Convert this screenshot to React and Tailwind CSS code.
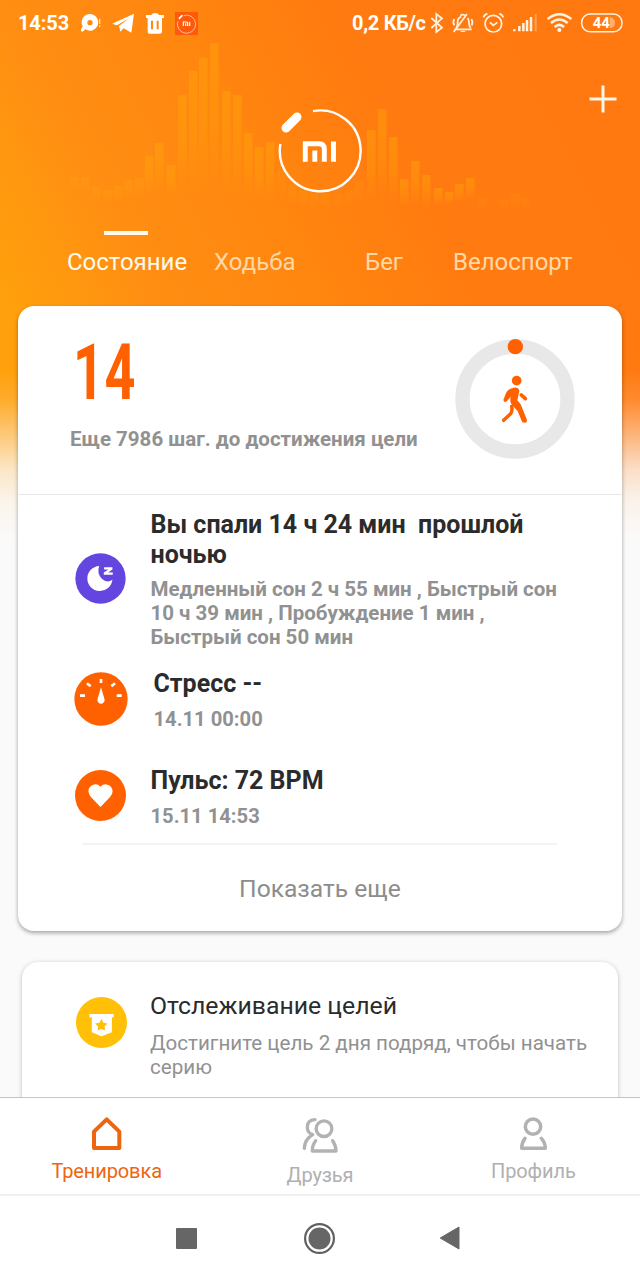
const waveBars = [
  [70, 177, 12], [81, 177, 14], [92, 187, 14], [103, 190, 14], [114, 186, 16], [124, 180, 18], [135, 178, 20],
  [145, 156, 40], [155, 143, 50], [167, 165, 32], [178, 95, 100], [189, 71, 122], [199, 58, 136], [210, 43, 150],
  [222, 91, 104], [233, 95, 100], [244, 133, 66], [255, 147, 54], [266, 142, 60], [277, 170, 30], [288, 184, 22],
  [299, 190, 18], [310, 194, 16], [321, 194, 16], [333, 194, 16], [345, 190, 18], [355, 182, 24], [367, 130, 74],
  [378, 109, 94], [389, 137, 68], [400, 179, 28], [411, 161, 46], [422, 175, 32], [434, 188, 18], [445, 192, 12],
  [455, 184, 18], [466, 178, 22], [478, 198, 12], [500, 200, 10], [511, 194, 14], [522, 198, 12],
];

function Wave() {
  return (
    <svg className="absolute left-0 top-0 -z-10" width="640" height="300" viewBox="0 0 640 300" aria-hidden="true">
      <defs>
        <linearGradient id="bar" x1="0" y1="0" x2="0" y2="1">
          <stop offset="0" stopColor="#ffab08" stopOpacity=".4" />
          <stop offset=".5" stopColor="#ffab08" stopOpacity=".28" />
          <stop offset="1" stopColor="#ffab08" stopOpacity="0" />
        </linearGradient>
      </defs>
      {waveBars.map(([x, y, h]) => (
        <rect key={x} x={x} y={y} width="8.5" height={h} rx="1" fill="url(#bar)" opacity={x > 475 || (x > 276 && x < 360) ? 0.35 : x < 140 ? 0.6 : 1} />
      ))}
    </svg>
  );
}

function StatusBar() {
  return (
    <div className="flex h-[46px] items-center text-white">
      <span className="ml-[18px] w-[62px] text-[20px] font-bold leading-none tracking-[-0.1px]">14:53</span>
      <svg width="21" height="20" viewBox="240 36 63 60" aria-hidden="true">
        <path fillRule="evenodd" fill="#fff" d="M270 39a25 25 0 1 1-14 46l-8 7q-7 0-5-8l5-8A25 25 0 0 1 270 39ZM270 57a8 8 0 1 0 0 16a8 8 0 1 0 0-16Z" />
        <path d="M299 53V69M299 73V78" stroke="#ffe0b8" strokeWidth="4" />
      </svg>
      <svg className="ml-[11px]" width="22" height="20" viewBox="335 38 66 60" aria-hidden="true">
        <path fill="#fff" d="M335 70 401 40 393 97 370 84 360 94 356 77 386 54 350 75Z" />
      </svg>
      <svg className="ml-[12px]" width="18" height="21" viewBox="438 35 54 63" aria-hidden="true">
        <path fillRule="evenodd" fill="#fff" d="M438 41H454L459 36H472L477 41H492V50H486V91Q486 97 480 97H449Q443 97 443 91V50H438ZM453 58V84H459V58ZM470 58V84H476V58Z" />
      </svg>
      <svg className="ml-[11px]" width="23" height="23" viewBox="525 32 69 69" aria-hidden="true">
        <rect x="525" y="32" width="69" height="69" fill="#ff5a0c" />
        <path d="M551 43A27 27 0 1 1 534 60" fill="none" stroke="#ffd5b8" strokeWidth="2.5" />
        <path d="M538 51 546 43" stroke="#fff" strokeWidth="5" strokeLinecap="round" />
        <path d="M550 74V62H560Q563 62 563 66V74M557 66V74M569 61V74" fill="none" stroke="#fff" strokeWidth="3.5" />
      </svg>
      <span className="ml-[154px] w-[78px] whitespace-nowrap text-[20px] font-bold leading-none tracking-[-0.3px]">0,2 КБ/с</span>
      <svg width="193" height="22" viewBox="331 34 579 66" fill="none" stroke="#fff3e2" strokeWidth="5.2" aria-hidden="true">
        <path d="M335 52 367 81 350 94V40L367 53 335 82" />
        <path d="M404 86H456M410 82Q414 76 414 63Q414 52 425 48M444 52Q448 58 448 68Q448 76 453 82M442 40 402 94M404 55Q398 64 404 74M455 55Q461 64 456 74M422 45Q430 38 438 46" />
        <path d="M420 90H440Q430 98 420 90Z" fill="#fff3e2" stroke="none" />
        <circle cx="521" cy="69" r="25" />
        <path d="M511 65 521 74 533 65M491 50Q494 42 503 39M551 50Q548 42 539 39" />
        <path d="M584 86V92M599 76V92M611 67V92M622 58V92M634 49V92" strokeWidth="7.5" />
        <path d="M648 40V92" strokeWidth="6" opacity=".35" />
        <path d="M684 55Q719 26 755 55M694 67Q719 46 744 67M705 79Q719 66 733 79" strokeWidth="7.5" />
        <circle cx="719" cy="88" r="6" fill="#fff" stroke="none" />
        <rect x="786" y="40" width="121" height="53" rx="25" strokeWidth="4.5" />
        <path d="M870 49Q886 52 886 66Q886 80 870 83Z" fill="#fff" opacity=".4" stroke="none" />
        <text x="819" y="82" fill="#fff" stroke="none" fontFamily="Roboto, sans-serif" fontWeight="700" fontSize="45">44</text>
      </svg>
    </div>
  );
}

function Logo() {
  return (
    <svg width="84" height="84" viewBox="278 109 84 84" fill="none" stroke="#fff" aria-label="Mi">
      <path d="M313 111.1A40.4 40.4 0 1 1 280.4 144" strokeWidth="2.4" />
      <path d="M286 128 297 117" strokeWidth="9" strokeLinecap="round" />
      <path d="M305.3 161.7V143.8H319Q324.3 143.8 324.3 149V161.7M314.8 150.5V161.7M333.5 141.5V161.7" strokeWidth="4.9" />
    </svg>
  );
}

function GoalRing() {
  return (
    <svg width="120" height="120" viewBox="164 147 360 360" aria-hidden="true">
      <circle cx="344" cy="327" r="157.5" fill="none" stroke="#e8e8e8" strokeWidth="43" />
      <circle cx="345" cy="170" r="23" fill="#ff6000" />
      <g fill="none" stroke="#ff6000" strokeLinecap="round" strokeLinejoin="round">
        <circle cx="349" cy="272" r="14.5" fill="#ff6000" stroke="none" />
        <path d="M340 293Q355 290 357 303L351 331Q355 336 361 343L380 390Q380 402 366 397L352 364 333 342Q328 334 331 320L320 333Q312 340 309 330L317 309Q325 295 340 293Z" fill="#ff6000" stroke="none" />
        <path d="M363 315 375 326" strokeWidth="11" />
        <path d="M334 349Q337 362 331 371L310 391" strokeWidth="10.5" />
      </g>
    </svg>
  );
}

function SleepIcon() {
  return (
    <svg width="51" height="51" viewBox="74 159 152 154" aria-hidden="true">
      <circle cx="150" cy="236" r="76" fill="#6545df" />
      <path d="M146 198A38 38 0 1 0 186 240Q169 251 154 237Q138 219 146 198Z" fill="#fff" />
      <path d="M161 202H186V209L173 218H187V225H160V218L174 209H161Z" fill="#fff" />
    </svg>
  );
}

function StressIcon() {
  return (
    <svg width="54" height="54" viewBox="73 67 162 162" aria-hidden="true">
      <circle cx="154" cy="148" r="80" fill="#ff6000" />
      <path d="M91 138H106M201 138H216M112 101 123 110M196 101 185 110M154 88V100" stroke="#fff" strokeWidth="8" />
      <path d="M154 113 165 150Q164 161 154 162Q144 161 143 150Z" fill="#fff" />
    </svg>
  );
}

function HeartIcon() {
  return (
    <svg width="51" height="51" viewBox="74 361 152 152" aria-hidden="true">
      <circle cx="150" cy="437" r="76" fill="#ff6000" />
      <path d="M150 411Q142 402 131 404Q114 408 114 425Q116 435 122 442L150 471 178 442Q186 434 186 425Q185 407 168 404Q158 402 150 411Z" fill="#fff" />
    </svg>
  );
}

function BadgeIcon() {
  return (
    <svg width="51" height="51" viewBox="227 291 152 152" aria-hidden="true">
      <circle cx="303" cy="367" r="76" fill="#ffc007" />
      <path d="M267 342H339V351H334V396L303 408 274 396V351H267Z" fill="#fff" />
      <path d="M303 356 308.5 368 321 370 312 379 314 391 303 385.5 291 391 293 379 284 370 297 368Z" fill="#ffc007" />
    </svg>
  );
}

function NavItem({ icon, label, className }) {
  return (
    <div className={`flex flex-1 flex-col items-center ${className}`}>
      {icon}
      {label}
    </div>
  );
}

function BottomNav() {
  return (
    <nav className="flex h-[99px] shrink-0 border-b-2 border-t border-b-[#f0f0f0] border-t-[#c5c5c5] bg-white text-[20px] leading-6 tracking-[-0.1px] text-[#b0b0b0]">
      <NavItem
        className="pt-[18px] text-[#ee6510]"
        label={<span className="mt-2">Тренировка</span>}
        icon={
          <svg width="32" height="35" viewBox="272 78 96 105" aria-hidden="true">
            <path d="M319 88 357 125V174H281V125Z" fill="none" stroke="#ee6510" strokeWidth="12" strokeLinejoin="round" />
          </svg>
        }
      />
      <NavItem
        className="pt-[19px]"
        label={<span className="mt-[9px]">Друзья</span>}
        icon={
          <svg width="36" height="37" viewBox="907 82 108 111" fill="none" stroke="#b2b2b2" strokeWidth="10" strokeLinecap="round" strokeLinejoin="round" aria-hidden="true">
            <circle cx="973" cy="117" r="23.5" />
            <path d="M946 90Q922 91 923 115Q924 130 939 135Q915 149 914 176M948 153Q937 169 938 184H1009Q1009 167 999 153" />
          </svg>
        }
      />
      <NavItem
        className="pt-[18px]"
        label={<span className="mt-2">Профиль</span>}
        icon={
          <svg width="30" height="35" viewBox="534 78 90 105" fill="none" stroke="#b2b2b2" strokeWidth="10.5" strokeLinecap="round" strokeLinejoin="round" aria-hidden="true">
            <circle cx="579" cy="110" r="23" />
            <path d="M555 145Q545 158 545 175H616Q616 158 604 145" />
          </svg>
        }
      />
    </nav>
  );
}

function SystemNav() {
  return (
    <div className="flex h-[84px] shrink-0 items-center bg-white pl-[176px] text-[#666]">
      <div className="size-[21px] rounded-[1px] bg-[#666]" />
      <svg className="ml-[106px]" width="33" height="33" viewBox="0 0 33 33" aria-hidden="true">
        <circle cx="16.5" cy="16.5" r="14.4" fill="none" stroke="#606060" strokeWidth="2.2" />
        <circle cx="16.5" cy="16.5" r="11" fill="#666" />
      </svg>
      <svg className="ml-[103px]" width="22" height="24" viewBox="0 0 22 24" aria-hidden="true">
        <path d="M1.2 12 20 1V23Z" fill="#666" stroke="#666" strokeLinejoin="round" />
      </svg>
    </div>
  );
}

export default function App() {
  return (
    <div className="flex h-[1280px] w-[640px] flex-col overflow-hidden bg-[#fafafa] font-[Roboto,sans-serif]">
      <main className="isolate flex min-h-0 flex-1 flex-col overflow-hidden bg-[linear-gradient(to_bottom,#fafafa00_370px,#fafafa22_400px,#fafafa80_440px,#fafafac8_470px,#fafafaee_500px,#fafafa_538px),linear-gradient(62deg,#ffa00c_14%,#ff980f_22%,#ff8e13_31%,#ff860f_49%,#ff7b10_65%,#ff7810_100%)] bg-[length:640px_1097px,640px_540px] bg-no-repeat">
        <header className="relative flex h-[306px] shrink-0 flex-col">
          <Wave />
          <StatusBar />
          <div className="grid h-[185px] grid-cols-3 pt-[63px]">
            <div className="col-start-2 justify-self-center">
              <Logo />
            </div>
            <svg className="-mt-6 mr-[23px] justify-self-end" width="28" height="28" viewBox="0 0 28 28" aria-label="Добавить">
              <path d="M14 .5V27.5M.5 14H27.5" stroke="#fff6e9" strokeWidth="3" />
            </svg>
          </div>
          <div className="ml-[104px] h-1 w-11 bg-[#fff9ee]" />
          <div className="mt-[11px] flex pl-[67px] text-[24px] leading-8 text-[#ffd8a8]">
            <span className="w-[147px] text-[#fff9ee]">Состояние</span>
            <span className="w-[151px]">Ходьба</span>
            <span className="w-[88px]">Бег</span>
            <span>Велоспорт</span>
          </div>
        </header>

        <section className="mx-[18px] h-[625px] shrink-0 rounded-[16px] bg-white shadow-[0_2px_4px_rgba(0,0,0,0.35)]">
          <div className="flex h-[189px] justify-between border-b border-[#e8e8e8] pl-[52px] pr-[47px]">
            <div>
              <div className="ml-[3px] mt-[29px] h-[77px] w-[60px] origin-left scale-x-70 text-[77px] font-bold leading-[77px] tracking-[0.8px] text-[#ff6000]">14</div>
              <div className="mt-[15px] whitespace-nowrap text-[20.5px] font-bold leading-6 text-[#919191]">Еще 7986 шаг. до достижения цели</div>
            </div>
            <div className="mt-[33px]">
              <GoalRing />
            </div>
          </div>
          <div className="flex h-[154px] pl-[56.5px]">
            <div className="w-[76px] pt-[58px]"><SleepIcon /></div>
            <div className="pt-[15px]">
              <h2 className="whitespace-pre text-[25px] font-bold leading-[30px] text-[#2b2b2b]">{"Вы спали 14 ч 24 мин  прошлой\nночью"}</h2>
              <p className="mt-[7px] whitespace-pre text-[20.5px] font-bold leading-6 text-[#919191]">{"Медленный сон 2 ч 55 мин , Быстрый сон\n10 ч 39 мин , Пробуждение 1 мин ,\nБыстрый сон 50 мин"}</p>
            </div>
          </div>
          <div className="flex h-[97px] pl-[56px]">
            <div className="w-[79.5px] pt-[23px]"><StressIcon /></div>
            <div className="pt-5">
              <h2 className="text-[25px] font-bold leading-[30px] text-[#2b2b2b]">Стресс --</h2>
              <p className="mt-2 text-[20.2px] font-bold leading-6 text-[#919191]">14.11 00:00</p>
            </div>
          </div>
          <div className="flex h-[97px] pl-[56.5px]">
            <div className="w-[76px] pt-[24px]"><HeartIcon /></div>
            <div className="pt-5">
              <h2 className="text-[25px] font-bold leading-[30px] text-[#2b2b2b]">Пульс: 72 BPM</h2>
              <p className="mt-2 text-[20.2px] font-bold leading-6 text-[#919191]">15.11 14:53</p>
            </div>
          </div>
          <div className="ml-16 mr-[65px] h-[2px] bg-[#f3f3f3]" />
          <div className="mt-[28px] text-center text-[24.6px] leading-8 text-[#8d8d8d]">Показать еще</div>
        </section>

        <section className="mx-[22px] mt-[31px] flex h-[160px] shrink-0 rounded-[16px] bg-white pl-[53.5px] shadow-[0_1px_4px_rgba(0,0,0,0.25)]">
          <div className="w-[74.5px] pt-[35px]"><BadgeIcon /></div>
          <div className="pt-[28px]">
            <h2 className="text-[24.8px] leading-8 text-[#2b2b2b]">Отслеживание целей</h2>
            <p className="mt-[9px] whitespace-pre text-[20.6px] leading-6 text-[#919191]">{"Достигните цель 2 дня подряд, чтобы начать\nсерию"}</p>
          </div>
        </section>
      </main>
      <BottomNav />
      <SystemNav />
    </div>
  );
}
